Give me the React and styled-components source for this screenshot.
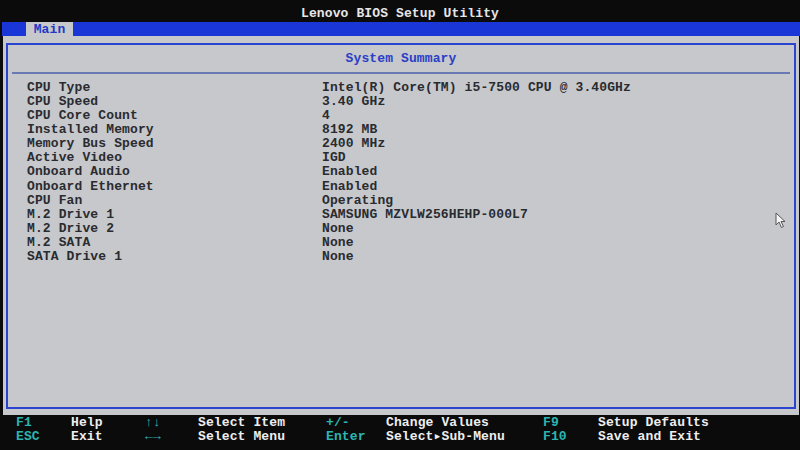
import React from "react";
import styled, { createGlobalStyle } from "styled-components";

const Global = createGlobalStyle`
  html, body { margin: 0; padding: 0; background: #0a0a0a; }
  #root { width: 800px; height: 450px; }
`;

const Screen = styled.div`
  position: relative;
  width: 800px;
  height: 450px;
  overflow: hidden;
  background: #0b0b0c;
  display: flex;
  flex-direction: column;
  font-family: "Liberation Mono", "DejaVu Sans Mono", monospace;
  font-size: 13px;
  font-weight: bold;
  letter-spacing: 0.12px;
`;

const TitleBar = styled.div`
  height: 22px;
  display: flex;
  align-items: center;
  justify-content: center;
  color: #e6e6e8;
  line-height: 14px;
  padding-top: 6px;
  box-sizing: border-box;
`;

const MenuBar = styled.div`
  height: 14px;
  margin-left: 2px;
  background: #1b36d6;
  display: flex;
  padding-left: 24px;
`;

const Tab = styled.div`
  width: 47px;
  height: 14px;
  background: #c6c8cb;
  color: #2438c4;
  line-height: 15px;
  text-align: center;
`;

const Panel = styled.div`
  height: 379px;
  margin: 0 1px 0 3px;
  background: #c6c8cb;
  padding: 7px 3px 6px 3px;
  box-sizing: border-box;
  display: flex;
`;

const Frame = styled.div`
  flex: 1;
  border: 2px solid #2a44cf;
  display: flex;
  flex-direction: column;
`;

const Heading = styled.div`
  height: 27px;
  line-height: 27px;
  text-align: center;
  color: #2b3ec6;
  margin: 0 4px;
  border-bottom: 2px solid #6a78b4;
`;

const Rows = styled.div`
  padding: 7px 0 0 19px;
  display: flex;
  flex-direction: column;
`;

const Row = styled.div`
  display: grid;
  grid-template-columns: 295px 1fr;
  height: 14.08px;
  line-height: 14px;
  color: #2a2b30;
  white-space: pre;
`;

const FooterWrap = styled.div`
  flex: 1;
  display: flex;
  flex-direction: column;
  padding-top: 1px;
`;

const Footer = styled.div`
  display: grid;
  grid-template-columns: 55px 74px 53px 128px 60px 157px 55px 1fr;
  grid-auto-rows: 14px;
  align-content: start;
  padding-left: 16px;
  line-height: 14px;
`;

const Key = styled.span`
  color: #2bb5b1;
  white-space: pre;
`;

const Desc = styled.span`
  color: #eeeeef;
  white-space: pre;
`;

const Cursor = styled.svg`
  position: absolute;
  left: 775px;
  top: 212px;
`;

const rows = [
  ["CPU Type", "Intel(R) Core(TM) i5-7500 CPU @ 3.40GHz"],
  ["CPU Speed", "3.40 GHz"],
  ["CPU Core Count", "4"],
  ["Installed Memory", "8192 MB"],
  ["Memory Bus Speed", "2400 MHz"],
  ["Active Video", "IGD"],
  ["Onboard Audio", "Enabled"],
  ["Onboard Ethernet", "Enabled"],
  ["CPU Fan", "Operating"],
  ["M.2 Drive 1", "SAMSUNG MZVLW256HEHP-000L7"],
  ["M.2 Drive 2", "None"],
  ["M.2 SATA", "None"],
  ["SATA Drive 1", "None"],
];

const help = [
  ["F1", "Help", "↑↓", "Select Item", "+/-", "Change Values", "F9", "Setup Defaults"],
  ["ESC", "Exit", "←→", "Select Menu", "Enter", "Select▸Sub-Menu", "F10", "Save and Exit"],
];

export default function App() {
  return (
    <>
      <Global />
      <Screen>
        <TitleBar>Lenovo BIOS Setup Utility</TitleBar>
        <MenuBar>
          <Tab>Main</Tab>
        </MenuBar>
        <Panel>
          <Frame>
            <Heading>System Summary</Heading>
            <Rows>
              {rows.map(([k, v]) => (
                <Row key={k}>
                  <span>{k}</span>
                  <span>{v}</span>
                </Row>
              ))}
            </Rows>
          </Frame>
        </Panel>
        <FooterWrap>
          <Footer>
            {help.flatMap((line, r) =>
              line.map((t, i) =>
                i % 2 === 0 ? <Key key={r + "-" + i}>{t}</Key> : <Desc key={r + "-" + i}>{t}</Desc>
              )
            )}
          </Footer>
        </FooterWrap>
        <Cursor width="12" height="17" viewBox="0 0 12 17">
          <path d="M1 1 L1 13 L4 10 L6.5 15.5 L8.5 14.5 L6 9.5 L10 9.5 Z" fill="#f4f4f4" stroke="#555" strokeWidth="1" strokeLinejoin="round" />
        </Cursor>
      </Screen>
    </>
  );
}
